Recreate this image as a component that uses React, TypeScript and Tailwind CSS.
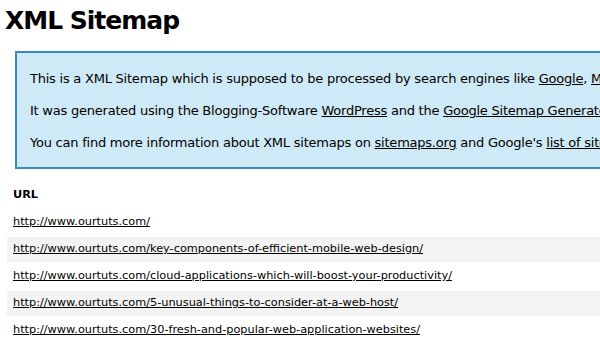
const urls = [
  "http://www.ourtuts.com/",
  "http://www.ourtuts.com/key-components-of-efficient-mobile-web-design/",
  "http://www.ourtuts.com/cloud-applications-which-will-boost-your-productivity/",
  "http://www.ourtuts.com/5-unusual-things-to-consider-at-a-web-host/",
  "http://www.ourtuts.com/30-fresh-and-popular-web-application-websites/",
];

export default function App() {
  return (
    <div className="w-[600px] h-[337px] overflow-hidden bg-white text-black font-['DejaVu_Sans',sans-serif]">
      <h1 className="pl-[5px] pt-[6px] text-[25px] font-bold leading-[30px] tracking-[-1px] whitespace-nowrap">
        XML Sitemap
      </h1>
      <div className="ml-[15px] mt-[15px] w-[700px] h-[118px] border-2 border-[#3b89bd] bg-[#cfeaf7] pl-[13px] pt-[15px] text-[13px] tracking-[-0.23px] whitespace-nowrap">
        <p className="leading-[22px]">
          This is a XML Sitemap which is supposed to be processed by search engines like{" "}
          <a className="underline">Google</a>, <a className="underline">MSN Search</a> and{" "}
          <a className="underline">YAHOO</a>.
        </p>
        <p className="mt-[10px] leading-[22px]">
          It was generated using the Blogging-Software <a className="underline">WordPress</a> and the{" "}
          <a className="underline">Google Sitemap Generator Plugin</a> by{" "}
          <a className="underline">Arne Brachhold</a>.
        </p>
        <p className="mt-[10px] leading-[22px]">
          You can find more information about XML sitemaps on <a className="underline">sitemaps.org</a> and
          Google's <a className="underline">list of sitemap programs</a>.
        </p>
      </div>
      <table className="ml-[5px] mt-[12px] border-separate border-spacing-[2px] text-[11.3px] w-[700px]">
        <thead>
          <tr>
            <th className="h-[25px] px-[6px] text-left font-bold">URL</th>
          </tr>
        </thead>
        <tbody>
          {urls.map((u, i) => (
            <tr key={u} className={i % 2 === 1 ? "bg-[#f3f3f3]" : ""}>
              <td className="h-[25px] px-[6px] whitespace-nowrap">
                <a className="underline">{u}</a>
              </td>
            </tr>
          ))}
        </tbody>
      </table>
    </div>
  );
}
